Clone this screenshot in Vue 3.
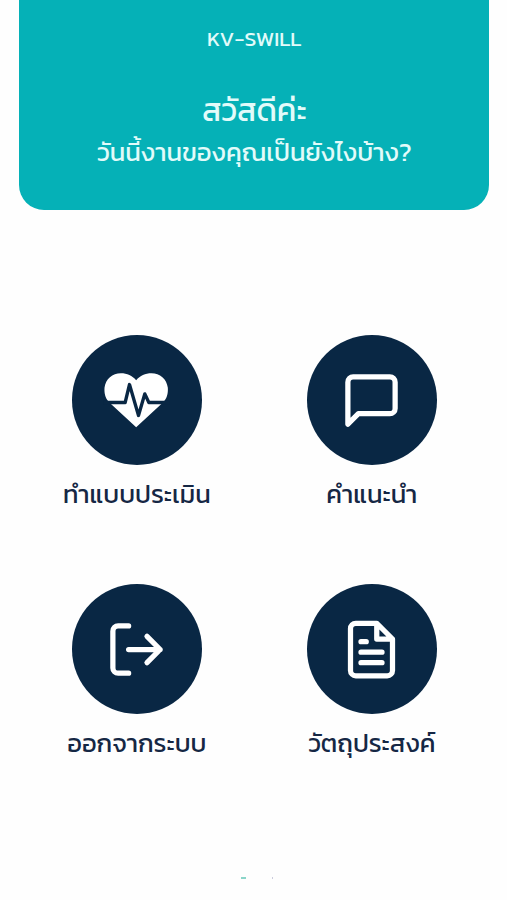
<script setup>
const items = [
  { icon: 'heart', label: 'ทำแบบประเมิน' },
  { icon: 'message', label: 'คำแนะนำ' },
  { icon: 'logout', label: 'ออกจากระบบ' },
  { icon: 'file', label: 'วัตถุประสงค์' },
]
</script>

<template>
  <main class="screen">
    <header class="hero">
      <div class="brand">KV-SWILL</div>
      <h1 class="greeting">สวัสดีค่ะ</h1>
      <p class="question">วันนี้งานของคุณเป็นยังไงบ้าง?</p>
    </header>
    <nav class="menu">
      <a v-for="item in items" :key="item.icon" class="item">
        <span class="disc">
          <svg v-if="item.icon === 'heart'" class="icon" viewBox="135.5 130.5 189 189">
            <path class="solid" d="M229 305L151 233C136 220 133 205 134 187C137 160 158 143 183 143C202 143 217 150 229 164C241 150 256 143 275 143C300 143 321 160 324 187C325 205 322 220 307 233Z" />
            <path class="pulse" d="M130 231H196L209 177L236 270L255 205L267 231H328" />
          </svg>
          <svg v-else class="icon line" viewBox="0 0 24 24">
            <path v-if="item.icon === 'message'" d="M21 15a2 2 0 0 1-2 2H7l-4 4V5a2 2 0 0 1 2-2h14a2 2 0 0 1 2 2z" />
            <path v-else-if="item.icon === 'logout'" d="M9 21H5a2 2 0 0 1-2-2V5a2 2 0 0 1 2-2h4M16 17l5-5-5-5M21 12H9" />
            <path v-else d="M14 2H6a2 2 0 0 0-2 2v16a2 2 0 0 0 2 2h12a2 2 0 0 0 2-2V8zM14 2v6h6M16 13H8M16 17H8M10 9H8" />
          </svg>
        </span>
        <span class="label">{{ item.label }}</span>
      </a>
    </nav>
    <footer class="marks"><i class="dash"></i><i class="dot"></i></footer>
  </main>
</template>

<style>
body { background: #fefefe; }
</style>

<style scoped>
.screen {
  box-sizing: border-box;
  height: 900px;
  overflow: hidden;
  font-family: Kanit, Prompt, "Noto Sans Thai", "Noto Sans", sans-serif;
}
.hero {
  box-sizing: border-box;
  width: 470px;
  height: 210px;
  margin-left: 19.3px;
  padding-top: 24px;
  border-radius: 0 0 25px 25px;
  background: #05b1b7;
  color: #e2fbfa;
  text-align: center;
  white-space: nowrap;
}
.brand { height: 30px; line-height: 30px; font-size: 21.3px; }
.greeting { height: 44px; margin: 34px 0 0; line-height: 44px; font-size: 31.8px; font-weight: 400; }
.question { height: 40px; margin: 0; line-height: 40px; font-size: 25.6px; }
.menu {
  display: grid;
  grid-template-columns: 235px 235px;
  grid-auto-rows: 249px;
  margin: 125px 0 0 19.3px;
}
.item { display: flex; flex-direction: column; align-items: center; }
.disc {
  display: flex;
  align-items: center;
  justify-content: center;
  width: 130.4px;
  height: 130px;
  border-radius: 50%;
  background: #092744;
}
.icon { width: 63px; height: 63px; overflow: visible; }
.line { fill: none; stroke: #fff; stroke-width: 2; stroke-linecap: round; stroke-linejoin: round; }
.solid { fill: #fff; }
.pulse { fill: none; stroke: #092744; stroke-width: 10; stroke-linejoin: round; }
.label { height: 40px; margin-top: 9.2px; line-height: 40px; font-size: 25.5px; color: #152744; white-space: nowrap; }
.marks { display: flex; gap: 26px; margin: 44px 0 0 241px; }
.dash { width: 5px; height: 2px; background: #8bd5c9; }
.dot { width: 1px; height: 2px; background: #ccd; }
</style>
